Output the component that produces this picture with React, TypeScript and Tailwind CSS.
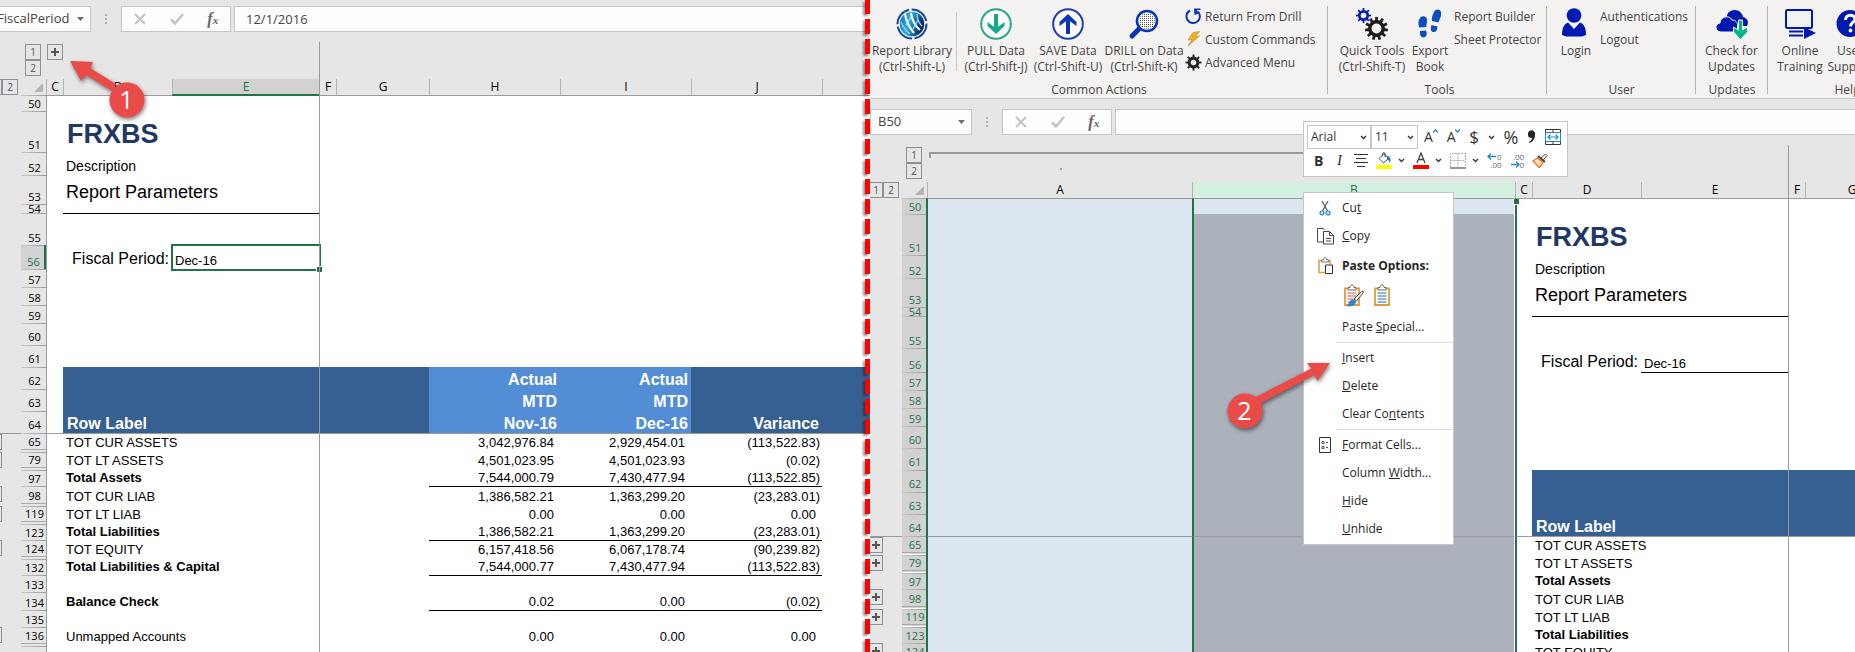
import type { ReactNode } from 'react';
import { clsx } from 'clsx';

type Row = {
  n: number;
  h: string;
  label?: string;
  bold?: boolean;
  values?: string[];
  head?: string[];
  rule?: boolean;
  collapsed?: boolean;
};

type Column = { id: string; w: string };

const rows: Row[] = [
  { n: 50, h: 'h-[16px]' },
  { n: 51, h: 'h-[41px]' },
  { n: 52, h: 'h-[23px]' },
  { n: 53, h: 'h-[29px]' },
  { n: 54, h: 'h-[9px]' },
  { n: 55, h: 'h-[32px]' },
  { n: 56, h: 'h-[24px]' },
  { n: 57, h: 'h-[18px]' },
  { n: 58, h: 'h-[18px]' },
  { n: 59, h: 'h-[18px]' },
  { n: 60, h: 'h-[22px]' },
  { n: 61, h: 'h-[22px]' },
  { n: 62, h: 'h-[22px]', head: ['Actual', 'Actual', ''] },
  { n: 63, h: 'h-[22px]', head: ['MTD', 'MTD', ''] },
  { n: 64, h: 'h-[22px]', head: ['Nov-16', 'Dec-16', 'Variance'] },
  { n: 65, h: 'h-[19px]', label: 'TOT CUR ASSETS', values: ['3,042,976.84', '2,929,454.01', '(113,522.83)'], collapsed: true },
  { n: 79, h: 'h-[18px]', label: 'TOT LT ASSETS', values: ['4,501,023.95', '4,501,023.93', '(0.02)'], collapsed: true },
  { n: 97, h: 'h-[16px]', label: 'Total Assets', bold: true, values: ['7,544,000.79', '7,430,477.94', '(113,522.85)'] },
  { n: 98, h: 'h-[20px]', label: 'TOT CUR LIAB', values: ['1,386,582.21', '1,363,299.20', '(23,283.01)'], rule: true, collapsed: true },
  { n: 119, h: 'h-[18px]', label: 'TOT LT LIAB', values: ['0.00', '0.00', '0.00'], collapsed: true },
  { n: 123, h: 'h-[16px]', label: 'Total Liabilities', bold: true, values: ['1,386,582.21', '1,363,299.20', '(23,283.01)'] },
  { n: 124, h: 'h-[19px]', label: 'TOT EQUITY', values: ['6,157,418.56', '6,067,178.74', '(90,239.82)'], rule: true, collapsed: true },
  { n: 132, h: 'h-[16px]', label: 'Total Liabilities & Capital', bold: true, values: ['7,544,000.77', '7,430,477.94', '(113,522.83)'] },
  { n: 133, h: 'h-[17px]', rule: true },
  { n: 134, h: 'h-[18px]', label: 'Balance Check', bold: true, values: ['0.02', '0.00', '(0.02)'] },
  { n: 135, h: 'h-[17px]', rule: true },
  { n: 136, h: 'h-[19px]', label: 'Unmapped Accounts', values: ['0.00', '0.00', '0.00'], collapsed: true },
  { n: 140, h: 'h-[19px]' },
];

const leftColumns: Column[] = [
  { id: 'C', w: 'w-[17px]' },
  { id: 'D', w: 'w-[109px]' },
  { id: 'E', w: 'w-[147px]' },
  { id: 'F', w: 'w-[17px]' },
  { id: 'G', w: 'w-[93px]' },
  { id: 'H', w: 'w-[131px]' },
  { id: 'I', w: 'w-[131px]' },
  { id: 'J', w: 'w-[131px]' },
  { id: '', w: '' },
];

const rightColumns: Column[] = [
  { id: 'A', w: 'w-[265px]' },
  { id: 'B', w: 'w-[323px]' },
  { id: 'C', w: 'w-[17px]' },
  { id: 'D', w: 'w-[109px]' },
  { id: 'E', w: 'w-[147px]' },
  { id: 'F', w: 'w-[17px]' },
  { id: 'G', w: 'w-[93px]' },
  { id: '', w: '' },
];

/* ---------- formula bar ---------- */

function FormulaBar({ name, value, cut }: { name: string; value: string; cut?: boolean }) {
  return (
    <div className={clsx('flex items-center pb-[10px] text-[13px] text-[#444]', cut ? 'pt-[6px]' : 'pt-[10px]')}>
      <div
        className={clsx(
          'flex h-[26px] shrink-0 items-center border border-[#c6c6c6] bg-[#fdfdfd] pr-[6px]',
          cut ? '-ml-[10px] w-[101px] pl-[6px]' : 'w-[102px] pl-[7px]'
        )}
      >
        <input aria-label="Name box" defaultValue={name} className="w-full min-w-0 bg-transparent outline-none" />
        <svg width="7" height="4" className="shrink-0">
          <path d="M0 0h7L3.500 4z" fill="#6a6a6a" />
        </svg>
      </div>
      <svg width="30" height="12" className="shrink-0">
        <path d="M14 1h2v2h-2zM14 5h2v2h-2zM14 9h2v2h-2z" fill="#b0b0b0" />
      </svg>
      <div className="flex h-[26px] w-[110px] shrink-0 items-center justify-around border border-[#c6c6c6] bg-[#fdfdfd]">
        <button aria-label="Cancel">
          <svg width="12" height="12">
            <path d="M1 1l10 10M11 1L1 11" stroke="#c3c3c3" strokeWidth="2" />
          </svg>
        </button>
        <button aria-label="Enter">
          <svg width="14" height="12">
            <path d="M1 6.500l4 4L13 1" fill="none" stroke="#c3c3c3" strokeWidth="2.500" />
          </svg>
        </button>
        <button aria-label="Insert function" className="font-['Liberation_Serif',serif] text-[16px] leading-[16px] font-bold italic text-[#666]">
          f<span className="text-[11px]">x</span>
        </button>
      </div>
      <input
        aria-label="Formula bar"
        defaultValue={value}
        className="ml-[3px] h-[26px] min-w-0 flex-1 border border-r-0 border-[#c6c6c6] bg-[#fdfdfd] pl-[11px] outline-none"
      />
    </div>
  );
}

/* ---------- sheet ---------- */

function LevelBox({ children, className }: { children?: ReactNode; className?: string }) {
  return (
    <button
      className={clsx(
        'block h-[16px] shrink-0 overflow-hidden border border-[#8a8f98] text-center text-[10px] leading-[14px] text-[#555]',
        className
      )}
    >
      {children}
    </button>
  );
}

function Plus() {
  return (
    <svg width="12" height="14" viewBox="1 0 12 14" className="mx-auto block">
      <path d="M7 3v8M3 7h8" stroke="#555" strokeWidth="2" />
    </svg>
  );
}

function cellText(row: Row, id: string, editing: boolean): ReactNode {
  if (id === 'D') {
    if (row.n === 51) return <span className="pb-[3px] pl-[4px] text-[27px] leading-[30px] font-bold text-[#1f3864]">FRXBS</span>;
    if (row.n === 52) return <span className="pb-px pl-[3px] text-[14px] leading-[16px]">Description</span>;
    if (row.n === 53) return <span className="pb-px pl-[3px] text-[18px] leading-[22px]">Report Parameters</span>;
    if (row.n === 56) return <span className="ml-auto pr-[3px] text-[16px] leading-[20px]">Fiscal Period:</span>;
    if (row.n === 64) return <span className="pl-[4px] text-[16px] leading-[18px] font-bold text-white">Row Label</span>;
    return row.label && <span className={clsx('pl-[3px]', row.bold ? 'pb-px font-bold' : 'pb-[2px]')}>{row.label}</span>;
  }
  if (id === 'E' && row.n === 56) {
    return (
      <>
        <span className="pb-px pl-[3px]">Dec-16</span>
        {editing && (
          <span className="absolute -top-px -right-[2px] -bottom-[2px] -left-px border-2 border-[#217346]">
            <span className="absolute -right-[3px] -bottom-[3px] size-[6px] border-t border-l border-white bg-[#217346]" />
          </span>
        )}
      </>
    );
  }
  const i = ['H', 'I', 'J'].indexOf(id);
  if (i < 0) return null;
  if (row.head) return <span className="ml-auto pr-[3px] text-[16px] leading-[18px] font-bold text-white">{row.head[i]}</span>;
  const value = row.values?.[i];
  return (
    value && (
      <span className={clsx('ml-auto', row.bold ? 'pb-px' : 'pb-[2px]', value.startsWith('(') ? 'pr-[2px]' : 'pr-[6px]')}>
        {value}
      </span>
    )
  );
}

function cellStyle(row: Row, id: string, selected: boolean) {
  const frozenEdge = row.n === 65;
  const top = row.n === 50;
  const black =
    (row.n === 55 && (id === 'D' || id === 'E')) ||
    (row.rule && (id === 'H' || id === 'I' || id === 'J')) ||
    (selected && row.n === 57 && id === 'E');
  return clsx(
    row.h,
    'relative flex items-end whitespace-nowrap leading-[14px]',
    (top || frozenEdge) && 'border-t border-t-[#9b9b9b]',
    black && 'border-t border-t-black',
    !selected && id === 'C' && 'border-l border-l-[#9b9b9b]',
    id === 'F' && 'border-l border-l-[#9b9b9b]',
    row.head && id !== 'A' && id !== 'B' && id !== 'C' && (id === 'H' || id === 'I' ? 'bg-[#538dd5]' : 'bg-[#366092]'),
    id === 'A' && 'border-l border-l-[#217346] bg-[#dce6f1]',
    id === 'B' && 'border-r border-l-2 border-r-white border-l-[#217346]',
    id === 'B' && (top ? 'bg-[#dce6f1]' : 'bg-[#abb2bc]'),
    selected && id === 'C' && 'border-l-2 border-l-[#217346]'
  );
}

function Sheet({ columns, selected }: { columns: Column[]; selected: boolean }) {
  // the left pane edits E56, the right one has whole columns selected
  const firstLevel = selected ? 'w-[13px] border-l-0' : 'w-[2px] border-l-0';

  return (
    <table
      className={clsx(
        "table-fixed border-separate border-spacing-0 text-[13px] text-black font-['Liberation_Sans',Arial,sans-serif]",
        selected ? 'w-[1055px] min-w-full' : 'w-full'
      )}
    >
      <colgroup>
        <col className={selected ? 'w-[32px]' : 'w-[21px]'} />
        <col className="w-[25px]" />
        {columns.map((c) => (
          <col key={c.id} className={c.w} />
        ))}
      </colgroup>
      <thead className="font-['Open_Sans',sans-serif] text-[12px] font-normal">
        <tr>
          <td className="p-0" />
          <td className="p-0">
            <div className="h-[37px] pt-[2px] pl-[4px]">
              <LevelBox className="w-[16px]">1</LevelBox>
              <LevelBox className="w-[16px]">2</LevelBox>
            </div>
          </td>
          {columns.map((c) => (
            <td key={c.id} className="p-0">
              <div className={clsx('h-[37px]', c.id === 'F' && 'border-l border-[#9b9b9b]')}>
                {c.id === 'C' && !selected && (
                  <div className="pt-[2px] pl-px">
                    <LevelBox className="w-[16px]"><Plus /></LevelBox>
                  </div>
                )}
                {c.id === 'A' && (
                  <div className="flex flex-col items-center pt-[7px] pl-[2px]">
                    <div className="h-[6px] w-full border-t-2 border-l-2 border-[#999]" />
                    <div className="mt-[10px] size-[2px] bg-[#999]" />
                  </div>
                )}
                {c.id === 'B' && (
                  <div className="pt-[7px]">
                    <div className="w-1/2 border-t-2 border-[#999]" />
                  </div>
                )}
              </div>
            </td>
          ))}
        </tr>
        <tr>
          <td className="p-0">
            <div className="flex h-[16px]">
              <LevelBox className={firstLevel}>{selected && '1'}</LevelBox>
              <LevelBox className="w-[16px]">2</LevelBox>
            </div>
          </td>
          <td className="p-0">
            <svg width="25" height="16" className="block">
              <path d="M22 4v9h-9z" fill="#b4b4b4" />
            </svg>
          </td>
          {columns.map((c) => (
            <th key={c.id} className="p-0 font-normal">
              <div
                className={clsx(
                  'h-[16px] border-l text-center leading-[16px]',
                  c.id === 'F' ? 'border-l-[#9b9b9b]' : 'border-l-[#b4b4b4]',
                  c.id === 'E' && !selected && 'border-b border-b-[#217346] bg-[#d2d2d2] text-[#217346]',
                  c.id === 'B' && 'bg-[#d3f0e0] text-[#217346]'
                )}
              >
                {c.id}
              </div>
            </th>
          ))}
        </tr>
      </thead>
      <tbody>
        {rows.map((row) => {
          const active = selected || row.n === 56;
          return (
            <tr key={row.n}>
              <td className="p-0">
                <div className={clsx(row.h, row.n === 65 && 'border-t border-[#9b9b9b]')}>
                  {row.collapsed && (
                    <LevelBox className={firstLevel}>{selected && <Plus />}</LevelBox>
                  )}
                </div>
              </td>
              <th className="p-0 font-normal">
                <div
                  className={clsx(
                    row.h,
                    "flex flex-col overflow-hidden bg-[linear-gradient(to_right,#c8c8c8,#9b9b9b)] bg-[length:100%_1px] bg-no-repeat font-['Open_Sans',sans-serif] text-[11px] leading-[14px]",
                    row.n === 54 ? 'justify-center' : 'justify-end',
                    active && 'bg-[#d2d2d2] text-[#217346]',
                    row.n === 56 && !selected && 'border-r-2 border-[#217346]',
                    selected && 'border-r border-[#217346]'
                  )}
                >
                  <span className={clsx('shrink-0 pl-[2px]', row.h === 'h-[22px]' && 'pb-px')}>{row.n}</span>
                  {row.collapsed && (
                    <span className={clsx('h-[3px] w-full shrink-0 border-t border-[#aaa]', selected && 'border-b border-b-white')} />
                  )}
                </div>
              </th>
              {columns.map((c) => (
                <td key={c.id} className="p-0">
                  <div
                    className={clsx(
                      cellStyle(row, c.id, selected),
                      row.n === 50 && c.id === 'E' && !selected && 'border-t-[#217346]'
                    )}
                  >
                    {cellText(row, c.id, !selected)}
                    {row.n === 50 && c.id === 'B' && (
                      <span className="absolute top-0 -right-[5px] z-10 size-[6px] border-b border-l border-white bg-[#217346]" />
                    )}
                  </div>
                </td>
              ))}
            </tr>
          );
        })}
      </tbody>
    </table>
  );
}

/* ---------- ribbon icons ---------- */

const GlobeIcon = () => (
  <svg width="32" height="32" viewBox="0 0 32 32">
    <defs>
      <linearGradient id="globe" x1="0" y1="0" x2="1" y2="0.300">
        <stop offset="0" stopColor="#1264b0" />
        <stop offset="0.450" stopColor="#2fb0e0" />
        <stop offset="1" stopColor="#0b2468" />
      </linearGradient>
    </defs>
    <circle cx="16" cy="16" r="14.500" fill="#fff" stroke="#124a9c" strokeWidth="2" strokeDasharray="20 2.500" />
    <circle cx="16" cy="16" r="12.300" fill="url(#globe)" />
    <path d="M9 6c1 7 4 13 9 19M15 5c1 7 4 13 9 17" fill="none" stroke="#fff" strokeWidth="2" />
    <path d="M5 14c2 5 5 9 9 12M21 6c0 5 2 9 5 12M15 9l-5 8M22 12l-5 9" fill="none" stroke="#a5dcf2" strokeWidth="1.200" />
  </svg>
);

const CircleArrowIcon = ({ color, ring, up }: { color: string; ring: string; up?: boolean }) => (
  <svg width="32" height="32" viewBox="0 0 32 32">
    <circle cx="16" cy="16" r="14.800" fill="#fff" stroke={ring} strokeWidth="2" />
    {up ? (
      <path d="M16 6L7.500 14v4L14 13.200V26h4V13.200l6.500 4.800v-4z" fill={color} />
    ) : (
      <path d="M16 26l8.500-8v-4L18 18.800V6h-4v12.800L7.500 14v4z" fill={color} />
    )}
  </svg>
);

const DrillIcon = () => (
  <svg width="32" height="32" viewBox="0 0 32 32">
    <defs>
      <pattern id="dots" width="2" height="2" patternUnits="userSpaceOnUse">
        <path d="M0 0h1v1H0z" fill="#555" />
      </pattern>
    </defs>
    <path d="M11 21l-7 7" stroke="#0a35b5" strokeWidth="5" strokeLinecap="round" />
    <circle cx="19" cy="13" r="10" fill="#fff" />
    <circle cx="19" cy="13" r="8" fill="url(#dots)" />
    <circle cx="19" cy="13" r="10" fill="none" stroke="#0a35b5" strokeWidth="2.600" />
  </svg>
);

const ReturnIcon = () => (
  <svg width="17" height="17" viewBox="0 0 17 17">
    <path d="M5 2.500a6.700 6.700 0 1 0 8 1.200" fill="none" stroke="#0a35b5" strokeWidth="2" />
    <path d="M9 .5h6.500V2h-3.500l1.500 3.500L9.500 7z" fill="#0a35b5" />
  </svg>
);

const BoltIcon = () => (
  <svg width="17" height="17" viewBox="0 0 17 17">
    <path d="M8 1.500L14.500.5 10.500 5.500 14.500 5 3 15l4-6.500L3 9z" fill="#f2b01e" stroke="#a8894a" strokeWidth=".6" />
  </svg>
);

const Gear = ({ cx, cy, r, fill, hole, teeth = 8 }: { cx: number; cy: number; r: number; fill: string; hole: number; teeth?: number }) => (
  <g transform={`translate(${cx} ${cy})`}>
    {Array.from({ length: teeth }, (_, i) => (
      <rect key={i} x={-r * 0.12} y={-r} width={r * 0.24} height={r * 0.4} fill={fill} transform={`rotate(${(360 / teeth) * i})`} />
    ))}
    <circle r={(r * 0.74 + hole) / 2} fill="none" stroke={fill} strokeWidth={r * 0.74 - hole} />
  </g>
);

const GearIcon = () => (
  <svg width="17" height="17" viewBox="0 0 17 17">
    <Gear cx={8.500} cy={8.500} r={8} hole={2.800} fill="#262626" />
  </svg>
);

const GearsIcon = () => (
  <svg width="32" height="32" viewBox="0 0 32 32">
    <Gear cx={7.500} cy={7.500} r={7.500} hole={2.800} fill="#0a1fb5" />
    <Gear cx={20.500} cy={20.500} r={11.500} hole={5} teeth={11} fill="#1c1c1c" />
  </svg>
);

const FeetIcon = () => (
  <svg width="32" height="32" viewBox="0 0 32 32" fill="#0b4fc0">
    <path d="M20 4c2-3.500 6.500-3 7 0 .8 4-1.500 7-2.500 10.500L18 13c-.500-3.500.5-6 2-9z" />
    <path d="M17.500 17l6 1.500c0 4-2 6-4.500 5.500s-2.500-3.500-1.500-7z" />
    <path d="M6 10c2-3 6.500-2 7 1.500.3 3-.8 5-.8 7.500l-7 .500C4 16 4 13 6 10z" />
    <path d="M6 23l6-.5c1.500 3 .5 7-2.500 7s-4-3-3.500-6.500z" />
  </svg>
);

const UserIcon = () => (
  <svg width="32" height="32" viewBox="0 0 32 32" fill="#0019b0">
    <circle cx="14" cy="7.500" r="7.300" />
    <path d="M2 27c0-7 2-11 6-12.500l6 6.500 6-6.500c4 1.500 6 5.500 6 12.500l-4 1.500H6z" />
  </svg>
);

const CloudIcon = () => (
  <svg width="34" height="32" viewBox="0 0 34 32">
    <path d="M12 7c2-5 10-7 14-2 1 1 2 3 2 4 5 1 6 6 4 9H14l-2-4z" fill="#0019b0" />
    <path d="M6 24c-6 0-7-8-1-9 0-6 9-9 12-3 3 0 6 2 5.500 6v6z" fill="#0019b0" stroke="#f3f2f1" strokeWidth="1" />
    <path d="M23.500 12h4v10l5-3v5l-7 7.500-7-7.500v-5l5 3z" fill="#00b58a" stroke="#f3f2f1" strokeWidth="1" />
  </svg>
);

const ScreenIcon = () => (
  <svg width="32" height="32" viewBox="0 0 32 32">
    <rect x="2" y="2" width="26" height="18" rx="1.500" fill="none" stroke="#0019b0" strokeWidth="2" />
    <path d="M20 19l12 6-12 6z" fill="#0019b0" />
    <path d="M5 23.500h14M5 27.500h14" stroke="#0019b0" strokeWidth="2" />
  </svg>
);

const HelpIcon = () => (
  <svg width="28" height="32" viewBox="0 0 28 32">
    <circle cx="14" cy="15.500" r="13.500" fill="#0019b0" />
    <path d="M9.500 12c0-6.500 9.500-6 9.500-1 0 3.500-4.500 3.500-4.500 7.500" fill="none" stroke="#fff" strokeWidth="3" />
    <circle cx="14.500" cy="22.500" r="1.900" fill="#fff" />
  </svg>
);

/* ---------- ribbon ---------- */

function BigButton({ icon, lines, className }: { icon: ReactNode; lines: string[]; className: string }) {
  return (
    <button className={clsx('flex shrink-0 flex-col items-center whitespace-nowrap pt-[8px] leading-[16px]', className)}>
      <span className="mb-[3px] block h-[32px]">{icon}</span>
      {lines.map((line) => (
        <span key={line}>{line}</span>
      ))}
    </button>
  );
}

function SmallButton({ icon, children }: { icon?: ReactNode; children: ReactNode }) {
  return (
    <button className="flex h-[23px] items-center gap-[3px] whitespace-nowrap">
      {icon}
      {children}
    </button>
  );
}

function Group({ title, className, children }: { title: string; className: string; children: ReactNode }) {
  return (
    <section className={clsx('relative flex shrink-0 flex-col', className)}>
      <div className="flex h-[82px] items-start">{children}</div>
      <h2 className="text-center leading-[16px]">{title}</h2>
      <span className="absolute top-[6px] right-0 bottom-[4px] border-r border-[#b5b5b5]" />
    </section>
  );
}

function Ribbon() {
  return (
    <div className="flex h-[99px] overflow-hidden border-b border-[#c9c7c5] bg-[#f3f2f1] text-[12px] text-[#444]">
      <Group title="Common Actions" className="w-[458px]">
        <BigButton icon={<GlobeIcon />} lines={['Report Library', '(Ctrl-Shift-L)']} className="w-[84px]" />
        <span className="mx-[2px] mt-[12px] h-[59px] border-r border-[#c8c8c8]" />
        <BigButton icon={<CircleArrowIcon color="#17a88b" ring="#2aa587" />} lines={['PULL Data', '(Ctrl-Shift-J)']} className="w-[74px]" />
        <BigButton icon={<CircleArrowIcon color="#0a35b5" ring="#1a3fb0" up />} lines={['SAVE Data', '(Ctrl-Shift-U)']} className="w-[70px]" />
        <BigButton icon={<DrillIcon />} lines={['DRILL on Data', '(Ctrl-Shift-K)']} className="w-[82px]" />
        <div className="flex flex-col pt-[5px]">
          <SmallButton icon={<ReturnIcon />}>Return From Drill</SmallButton>
          <SmallButton icon={<BoltIcon />}>Custom Commands</SmallButton>
          <SmallButton icon={<GearIcon />}>Advanced Menu</SmallButton>
        </div>
      </Group>
      <Group title="Tools" className="w-[219px] pl-[4px]">
        <BigButton icon={<GearsIcon />} lines={['Quick Tools', '(Ctrl-Shift-T)']} className="w-[80px]" />
        <BigButton icon={<FeetIcon />} lines={['Export', 'Book']} className="w-[36px]" />
        <div className="flex flex-col pt-[5px] pl-[6px]">
          <SmallButton>Report Builder</SmallButton>
          <SmallButton>Sheet Protector</SmallButton>
        </div>
      </Group>
      <Group title="User" className="w-[149px]">
        <BigButton icon={<UserIcon />} lines={['Login']} className="ml-[7px] w-[44px]" />
        <div className="flex flex-col pt-[5px] pl-[2px]">
          <SmallButton>Authentications</SmallButton>
          <SmallButton>Logout</SmallButton>
        </div>
      </Group>
      <Group title="Updates" className="w-[72px]">
        <BigButton icon={<CloudIcon />} lines={['Check for', 'Updates']} className="w-[71px]" />
      </Group>
      <Group title="Help" className="w-[152px] pl-[7px]">
        <BigButton icon={<ScreenIcon />} lines={['Online', 'Training']} className="w-[50px]" />
        <BigButton icon={<HelpIcon />} lines={['User', 'Support']} className="w-[50px]" />
      </Group>
    </div>
  );
}

/* ---------- mini toolbar ---------- */

function Chevron() {
  return (
    <svg width="7" height="5" viewBox="0 0 7 5" className="shrink-0">
      <path d="M1 1l2.500 2.500L6 1" fill="none" stroke="#333" strokeWidth="1.300" />
    </svg>
  );
}

function MiniSelect({ label, value, className }: { label: string; value: string; className: string }) {
  return (
    <label className={clsx('flex h-[24px] items-center border border-[#c6c6c6] pr-[3px] pl-[3px]', className)}>
      <select aria-label={label} defaultValue={value} className="w-full min-w-0 appearance-none bg-transparent text-[12px] leading-[16px] outline-none">
        <option>{value}</option>
      </select>
      <Chevron />
    </label>
  );
}

function MiniToolbar() {
  return (
    <div className="absolute top-[121px] left-[433px] z-20 w-[265px] border border-[#c6c6c6] bg-white pt-[3px] pb-[4px] pl-[3px] text-[#333]">
      <div className="flex h-[24px] items-center">
        <MiniSelect label="Font" value="Arial" className="w-[64px]" />
        <MiniSelect label="Font size" value="11" className="w-[47px]" />
        <div className="flex flex-1 items-center justify-between px-[6px]">
          <button className="flex text-[14px] leading-[20px]">A<svg width="5" height="4" className="mt-[2px]"><path d="M0 3.500L2.500 1 5 3.500" fill="none" stroke="#1e8bcd" strokeWidth="1.300" /></svg></button>
          <button className="flex text-[14px] leading-[20px]">A<svg width="5" height="4" className="mt-[2px]"><path d="M0 .5L2.500 3 5 .5" fill="none" stroke="#1e8bcd" strokeWidth="1.300" /></svg></button>
          <button className="text-[17px] leading-[20px]">$</button>
          <button aria-label="Currency formats"><Chevron /></button>
          <button className="text-[18px] leading-[20px]">%</button>
          <button aria-label="Comma style">
            <svg width="9" height="14" viewBox="0 0 9 14"><path d="M1 4.500a3.600 3.600 0 1 1 7 .5c0 4-2 6.500-5.500 8L2 12c2-1.500 3-2.500 3-4.200C2.500 8.300 1 7 1 4.500z" fill="#262626" /></svg>
          </button>
          <button aria-label="Merge and center">
            <svg width="16" height="16" viewBox="0 0 16 16">
              <path d="M.5.500h15v15H.5zM.5 3.500h15M.5 12.500h15M8 .5v3M8 12.500v3" fill="none" stroke="#333" />
              <path d="M.5 3.500h15v9H.5z" fill="#fff" stroke="#1e8bcd" />
              <path d="M3 8h10M5.500 5.500L3 8l2.500 2.500M10.500 5.500L13 8l-2.500 2.500" fill="none" stroke="#1e8bcd" strokeWidth="1.200" />
            </svg>
          </button>
        </div>
      </div>
      <div className="flex h-[23px] items-center pl-[7px]">
        <button className="w-[7px] text-[14px] font-bold">B</button>
        <button className="ml-[15px] w-[7px] font-['Liberation_Serif',serif] text-[15px] italic">I</button>
        <button aria-label="Center" className="ml-[11px]">
          <svg width="14" height="13"><path d="M0 .5h14M2 4.500h10M0 8.500h14M3 12.500h8" stroke="#333" /></svg>
        </button>
        <button aria-label="Fill color" className="ml-[8px]">
          <svg width="16" height="17" viewBox="0 0 16 17">
            <path d="M3 6.500L8 1.500l4.500 5L7.500 11z" fill="#fff" stroke="#444" />
            <path d="M6.500 4V2c0-2 2.500-2 2.500 0v3" fill="none" stroke="#444" />
            <path d="M11 4c3 0 4 2 3 7-1-2-1.500-3-3-4z" fill="#2e75b6" />
            <path d="M0 13h16v4H0z" fill="#ff0" />
          </svg>
        </button>
        <span className="ml-[6px] flex"><Chevron /></span>
        <button aria-label="Font color" className="ml-[8px]">
          <svg width="16" height="17" viewBox="0 0 16 17">
            <path d="M4 11L8 1l4 10M5.500 7.500h5" fill="none" stroke="#444" strokeWidth="1.300" />
            <path d="M0 13h16v4H0z" fill="#f00" />
          </svg>
        </button>
        <span className="ml-[6px] flex"><Chevron /></span>
        <button aria-label="Borders" className="ml-[8px]">
          <svg width="16" height="16" viewBox="0 0 16 16">
            <path d="M.5 14V.5h15V14M8 .5V14M.5 7.500h15" fill="none" stroke="#aaa" strokeDasharray="2 1" />
            <path d="M0 15h16" stroke="#333" />
          </svg>
        </button>
        <span className="ml-[6px] flex"><Chevron /></span>
        <button aria-label="Increase decimal" className="ml-[8px] flex flex-col items-end text-[8px] leading-[8px] text-[#666]">
          <span className="flex items-center"><svg width="10" height="7"><path d="M1 3.500h8M4 .5l-3 3 3 3" fill="none" stroke="#1e8bcd" strokeWidth="1.300" /></svg>0</span>
          <span>.00</span>
        </button>
        <button aria-label="Decrease decimal" className="ml-[8px] flex flex-col items-end text-[8px] leading-[8px] text-[#666]">
          <span>.00</span>
          <span className="flex items-center"><svg width="10" height="7"><path d="M1 3.500h8M6 .5l3 3-3 3" fill="none" stroke="#1e8bcd" strokeWidth="1.300" /></svg>0</span>
        </button>
        <button aria-label="Format painter" className="ml-[8px]">
          <svg width="16" height="15" viewBox="0 0 16 15">
            <path d="M8.500 5.500l5-4.500 1.500 1.500-4 5z" fill="#fff" stroke="#444" />
            <path d="M6 3l7 6" stroke="#444" strokeWidth="2" />
            <path d="M5.500 5L1 8l6.500 6.500L11 9.500z" fill="#fbe0c3" stroke="#ed7d31" strokeWidth="1.500" />
          </svg>
        </button>
      </div>
    </div>
  );
}

/* ---------- context menu ---------- */

const ScissorsIcon = () => (
  <svg width="12" height="16" viewBox="0 0 12 16">
    <path d="M3 1l5.500 10M9 1L3.500 11" stroke="#555" strokeWidth="1.200" />
    <circle cx="3" cy="13" r="2" fill="#cfe6f5" stroke="#1e8bcd" strokeWidth="1.200" />
    <circle cx="9" cy="13" r="2" fill="#cfe6f5" stroke="#1e8bcd" strokeWidth="1.200" />
  </svg>
);

const CopyIcon = () => (
  <svg width="17" height="17" viewBox="0 0 17 17">
    <path d="M6 14H.5V.5h6L7.500 2" fill="none" stroke="#444" />
    <path d="M6.500 3.500h6l4 4v8.500h-10z" fill="#fff" stroke="#444" />
    <path d="M12.500 3.500v4h4M9 10.500h5M9 13h5" fill="none" stroke="#444" />
  </svg>
);

const PasteIcon = () => (
  <svg width="15" height="17" viewBox="0 0 15 17">
    <path d="M7 15.500H1v-12h11v4" fill="none" stroke="#e59a3c" strokeWidth="1.500" />
    <path d="M3.500 5V3h2c0-3 3-3 3 0h2v2z" fill="#fff" stroke="#777" />
    <path d="M7.500 8h7v8.500h-7z" fill="#fff" stroke="#333" />
  </svg>
);

const ClipboardIcon = ({ brush }: { brush?: boolean }) => (
  <svg width="20" height="23" viewBox="0 0 20 23">
    <path d="M1 4.500h14V21H1z" fill="#fff" stroke="#e59a3c" strokeWidth="1.800" />
    <path d="M4 6V3.500h2c0-3.500 4-3.500 4 0h2V6z" fill="#fff" stroke="#666" />
    <path d="M3.500 9h9M3.500 12h9M3.500 15h9M3.500 18h9" stroke={brush ? '#e2533e' : '#1e73b8'} strokeWidth="1.200" />
    {brush && (
      <>
        <path d="M10 15l7.500-7.500c1.500-1 2.500 0 1.500 1.500L12.500 17z" fill="#eee" stroke="#444" />
        <path d="M2 22c3 0 2-5 6-6.500 3 0 5 2.500 3 5-2 2-6 2.500-9 1.500z" fill="#2e86cc" />
      </>
    )}
  </svg>
);

const FormatCellsIcon = () => (
  <svg width="12" height="16" viewBox="0 0 12 16">
    <path d="M.5.500h11v15H.5z" fill="#fff" stroke="#333" />
    <path d="M3 4.500h2v2H3zM3 9.500h2v2H3zM7 5.500h2M7 10.500h2" fill="none" stroke="#555" />
  </svg>
);

function MenuItem({ icon, children, bold }: { icon?: ReactNode; children: ReactNode; bold?: boolean }) {
  return (
    <button role="menuitem" className={clsx('flex w-full items-center text-left whitespace-nowrap', bold ? 'h-[31px] font-bold' : 'h-[28px]')}>
      <span className="flex w-[38px] shrink-0 justify-center pl-[4px]">{icon}</span>
      <span>{children}</span>
    </button>
  );
}

function ContextMenu() {
  return (
    <div role="menu" className="absolute top-[192px] left-[433px] z-20 w-[151px] border border-[#c6c6c6] bg-white py-px text-[12px] text-[#262626]">
      <MenuItem icon={<ScissorsIcon />}>Cu<u>t</u></MenuItem>
      <MenuItem icon={<CopyIcon />}><u>C</u>opy</MenuItem>
      <MenuItem icon={<PasteIcon />} bold>Paste Options:</MenuItem>
      <div className="flex h-[32px] items-start gap-[10px] pt-[3px] pl-[40px]">
        <button aria-label="Paste"><ClipboardIcon brush /></button>
        <button aria-label="Paste values"><ClipboardIcon /></button>
      </div>
      <MenuItem>Paste <u>S</u>pecial...</MenuItem>
      <hr className="my-px ml-[33px] border-[#dcdcdc]" />
      <MenuItem><u>I</u>nsert</MenuItem>
      <MenuItem><u>D</u>elete</MenuItem>
      <MenuItem>Clear Co<u>n</u>tents</MenuItem>
      <hr className="my-px ml-[33px] border-[#dcdcdc]" />
      <MenuItem icon={<FormatCellsIcon />}><u>F</u>ormat Cells...</MenuItem>
      <MenuItem>Column <u>W</u>idth...</MenuItem>
      <MenuItem><u>H</u>ide</MenuItem>
      <MenuItem><u>U</u>nhide</MenuItem>
    </div>
  );
}

/* ---------- callouts ---------- */

function Callout({ n, className }: { n: 1 | 2; className: string }) {
  return (
    <div className={clsx('pointer-events-none absolute z-30', className)}>
      <svg width="110" height="74" viewBox="0 0 110 74" className="drop-shadow-[1px_2px_2px_rgba(0,0,0,0.5)]">
        {n === 1 ? (
          <>
            <path d="M4 5l23 1-3 6 26 16-4 7-26-16-5 6z" fill="#e94b49" />
            <circle cx="61" cy="44" r="17.500" fill="#e94b49" />
          </>
        ) : (
          <>
            <path d="M105 7H82l4 5.500-58 30 3.500 7 58-30.500 3 6z" fill="#e94b49" />
            <circle cx="20" cy="55" r="17.500" fill="#e94b49" />
          </>
        )}
      </svg>
      <span
        className={clsx(
          'absolute w-[35px] text-center text-[25px] leading-[35px] text-white',
          n === 1 ? 'top-[26px] left-[43px]' : 'top-[37px] left-[2px]'
        )}
      >
        {n}
      </span>
    </div>
  );
}

export default function App() {
  return (
    <main className="grid h-screen grid-cols-[870fr_985fr] overflow-hidden bg-white font-['Open_Sans','Noto_Sans',sans-serif]">
      <section className="relative min-w-0 overflow-hidden bg-[linear-gradient(#e6e6e6_95px,transparent_95px),linear-gradient(to_right,#e6e6e6_46px,#fff_46px)]">
        <FormulaBar name="FiscalPeriod" value="12/1/2016" cut />
        <Sheet columns={leftColumns} selected={false} />
        <Callout n={1} className="top-[56px] left-[66px]" />
        <div className="absolute inset-y-0 right-0 z-10 w-[5px] bg-[repeating-linear-gradient(to_bottom,#f00_0_14px,transparent_14px_19px,#f00_19px_20px)] drop-shadow-[-2px_2px_1px_rgba(0,0,0,0.4)]" />
      </section>
      <section className="relative min-w-0 overflow-hidden bg-[linear-gradient(#e6e6e6_198px,transparent_198px),linear-gradient(to_right,#e6e6e6_57px,#fff_57px)]">
        <Ribbon />
        <FormulaBar name="B50" value="" />
        <Sheet columns={rightColumns} selected />
        <MiniToolbar />
        <ContextMenu />
        <Callout n={2} className="top-[356px] left-[355px]" />
      </section>
    </main>
  );
}
